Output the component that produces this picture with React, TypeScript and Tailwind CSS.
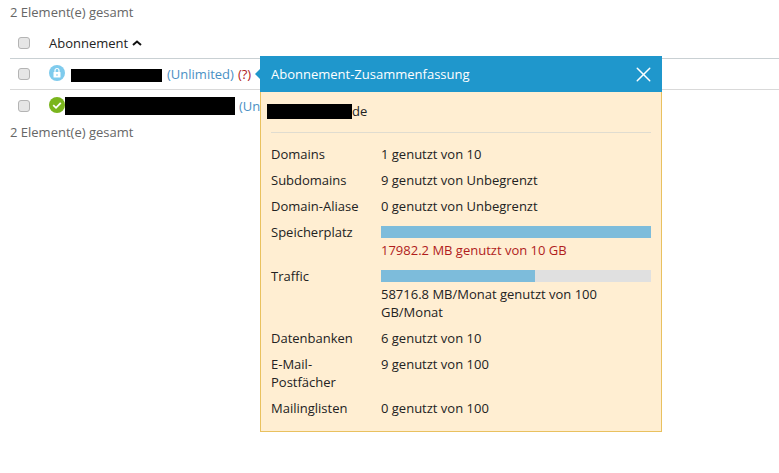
import { X } from "lucide-react";

const Box = () => (
  <span className="block w-[12px] h-[12px] rounded-[3px] border border-[#b4b4b4] bg-[#e6e6e6]" />
);

const Stat = ({ label, value }: { label: string; value: string }) => (
  <div className="flex pb-[8px]">
    <div className="w-[110px] pr-2 shrink-0">{label}</div>
    <div className="flex-1">{value}</div>
  </div>
);

const Bar = ({ pct }: { pct: number }) => (
  <div className="h-[12px] mt-[3px] mb-[3px] bg-[#e0e0e0]">
    <div className="h-full bg-[#7dbcdb]" style={{ width: `${pct}%` }} />
  </div>
);

export default function App() {
  return (
    <div
      className="relative w-[779px] h-[473px] overflow-hidden bg-white text-[13px] leading-[18px] text-[#222]"
      style={{ fontFamily: "'Open Sans', sans-serif" }}
    >
      <div className="pl-[10px] pt-[3px]">
        <div className="text-[#666]">2 Element(e) gesamt</div>
        <div className="mt-[8px]">
          <div className="flex items-center h-[30px] pb-[2px] border-b border-[#c9d0d3]">
            <div className="w-[39px] pl-[8px]"><Box /></div>
            <span>Abonnement</span>
            <svg width="10" height="6" viewBox="0 0 10 6" className="ml-[4px]">
              <path d="M1 5 L5 1.5 L9 5" fill="none" stroke="#111" strokeWidth="2" />
            </svg>
          </div>
          <div className="flex items-center h-[31px] border-b border-[#d9d9d9]">
            <div className="w-[39px] pl-[8px]"><Box /></div>
            <svg width="16" height="16" viewBox="0 0 16 16" className="mb-[2px]">
              <circle cx="8" cy="8" r="8" fill="#7fcbed" />
              <rect x="4.5" y="7" width="7" height="5.5" rx="0.5" fill="#fff" />
              <path d="M6 7 V5.5 a2 2 0 0 1 4 0 V7" fill="none" stroke="#fff" strokeWidth="1.2" />
              <rect x="7.5" y="9" width="1" height="2" fill="#7fcbed" />
            </svg>
            <div className="w-[91px] h-[13px] ml-[6px] mt-[2px] bg-black" />
            <span className="ml-[5px] text-[#4a90c4]">(Unlimited)</span>
            <span className="ml-[4px] text-[#b01c1c]">(?)</span>
          </div>
          <div className="flex items-center h-[31px]">
            <div className="w-[39px] pl-[8px]"><Box /></div>
            <svg width="16" height="16" viewBox="0 0 16 16" className="mb-[2px]">
              <circle cx="8" cy="8" r="8" fill="#7ab51d" />
              <path d="M4.2 8.2 L7 10.8 L11.8 5.8" fill="none" stroke="#fff" strokeWidth="1.8" />
            </svg>
            <div className="w-[170px] h-[18px] bg-black" />
            <span className="ml-[4px] text-[#4a90c4]">(Unlimited)</span>
          </div>
        </div>
        <div className="mt-[2px] text-[#666]">2 Element(e) gesamt</div>
      </div>

      <div className="absolute left-[260px] top-[56px] w-[402px] h-[376px] bg-[#ffeed2] border border-[#e9c15f] border-t-0">
        <div className="absolute left-[-6px] top-[12px] w-0 h-0 border-y-[6px] border-y-transparent border-r-[6px] border-r-[#1f97cc]" />
        <div className="flex items-center justify-between h-[36px] -mx-px pl-[11px] pr-[6px] bg-[#1f97cc] text-white">
          <span>Abonnement-Zusammenfassung</span>
          <X size={25} strokeWidth={1.4} />
        </div>
        <div className="flex items-center mt-[10px] ml-[6px] h-[18px]">
          <div className="w-[85px] h-[15px] bg-black" />
          <span>de</span>
        </div>
        <div className="mx-[10px] mt-[12px] mb-[12px] border-t border-[#e0dcd0]" />
        <div className="px-[10px]">
          <Stat label="Domains" value="1 genutzt von 10" />
          <Stat label="Subdomains" value="9 genutzt von Unbegrenzt" />
          <Stat label="Domain-Aliase" value="0 genutzt von Unbegrenzt" />
          <div className="flex pb-[8px]">
            <div className="w-[110px] pr-2 shrink-0">Speicherplatz</div>
            <div className="flex-1">
              <Bar pct={100} />
              <div className="font-medium text-[#b01c1c]">17982.2 MB genutzt von 10 GB</div>
            </div>
          </div>
          <div className="flex pb-[8px]">
            <div className="w-[110px] pr-2 shrink-0">Traffic</div>
            <div className="flex-1">
              <Bar pct={57} />
              <div>58716.8 MB/Monat genutzt von 100 GB/Monat</div>
            </div>
          </div>
          <Stat label="Datenbanken" value="6 genutzt von 10" />
          <Stat label="E-Mail-Postfächer" value="9 genutzt von 100" />
          <Stat label="Mailinglisten" value="0 genutzt von 100" />
        </div>
      </div>
    </div>
  );
}
